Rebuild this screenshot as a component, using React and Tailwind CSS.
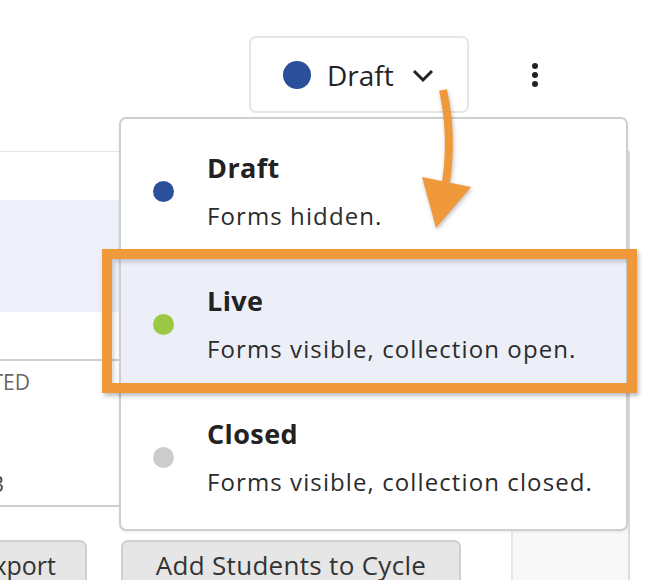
import React from 'react';

const font = { fontFamily: '"Open Sans", "Liberation Sans", sans-serif' };

// Status options shown in the open menu.
const statuses = [
    { name: 'Draft', desc: 'Forms hidden.', dot: 'bg-[#2c4f9c]', active: false },
    { name: 'Live', desc: 'Forms visible, collection open.', dot: 'bg-[#9bc944]', active: true },
    { name: 'Closed', desc: 'Forms visible, collection closed.', dot: 'bg-[#cccccc]', active: false },
];

function StatusButton() {
    return (
        <button className="flex items-center h-[77px] w-[220px] pl-[32px] border-2 border-[#e6e6e6] rounded-[7px] bg-white">
            <span className="w-[28px] h-[28px] rounded-full bg-[#2c4f9c] shrink-0" />
            <span className="ml-[16px] text-[28px] leading-none text-[#222]">Draft</span>
            <svg className="ml-[18px] mt-[2px]" width="22" height="14" viewBox="0 0 22 14">
                <path d="M2 2 L11 11 L20 2" fill="none" stroke="#222" strokeWidth="3" />
            </svg>
        </button>
    );
}

function Kebab() {
    return (
        <svg width="12" height="26" viewBox="0 0 12 26">
            <circle cx="6" cy="4" r="3" fill="#222" />
            <circle cx="6" cy="13" r="3" fill="#222" />
            <circle cx="6" cy="22" r="3" fill="#222" />
        </svg>
    );
}

function StatusMenu() {
    return (
        <div className="absolute left-[119px] top-[117px] w-[509px] h-[414px] py-[6px] bg-white border-2 border-[#cfcfcf] rounded-[7px] shadow-[0_1px_3px_rgba(0,0,0,0.08)]">
            {statuses.map((s) => (
                <div
                    key={s.name}
                    className={`flex items-center h-[133px] pl-[32px] ${s.active ? 'bg-[#eceff8]' : 'bg-white'}`}
                >
                    <span className={`w-[21px] h-[21px] rounded-full shrink-0 ${s.dot}`} />
                    <div className="ml-[33px] mt-[-2px]">
                        <div className="text-[27px] leading-[34px] font-bold tracking-[0.4px] text-[#222]">{s.name}</div>
                        <div className="mt-[16px] text-[24px] leading-[30px] tracking-[1.1px] text-[#2b2b2b]">{s.desc}</div>
                    </div>
                </div>
            ))}
        </div>
    );
}

function Annotation() {
    return (
        <>
            <div className="absolute left-[102px] top-[249px] w-[535px] h-[144px] border-[10px] border-[#f0993a] shadow-[2px_3px_4px_rgba(0,0,0,0.25),inset_2px_3px_4px_rgba(0,0,0,0.18)]" />
            <svg
                className="absolute left-[400px] top-[80px] drop-shadow-[1px_2px_2px_rgba(0,0,0,0.25)]"
                width="100"
                height="160"
                viewBox="400 80 100 160"
            >
                <path d="M443 90 Q453 135 446 182" fill="none" stroke="#f0993a" strokeWidth="8" />
                <polygon points="422,177 471,187 436,228" fill="#f0993a" />
            </svg>
        </>
    );
}

export default function App() {
    return (
        <div className="relative w-[654px] h-[580px] overflow-hidden bg-white" style={font}>
            <div className="flex items-center pt-[36px] pl-[249px]">
                <StatusButton />
                <div className="ml-[60px] mt-[1px]">
                    <Kebab />
                </div>
            </div>

            {/* card behind the menu */}
            <div className="mt-[38px] w-[630px] h-[500px] flex border-t border-r-2 border-t-[#e6e6e6] border-r-[#dcdcdc]">
                <div className="w-[511px] shrink-0">
                    <div className="h-[48px]" />
                    <div className="h-[112px] bg-[#edf0f8]" />
                    <div className="h-[49px] border-b-2 border-[#d0d0d0]" />
                    <div className="h-[146px] border-b-2 border-[#d0d0d0] flex flex-col">
                        <div className="w-[30px] flex justify-end pt-[9px]">
                            <span className="whitespace-nowrap text-[21px] leading-[24px] text-[#666]">SUBMITTED</span>
                        </div>
                        <div className="w-[4px] flex justify-end mt-[78px]">
                            <span className="whitespace-nowrap text-[21px] leading-[24px] text-[#444]">3</span>
                        </div>
                    </div>
                    <div className="flex mt-[33px]">
                        <div className="w-[87px] flex justify-end shrink-0">
                            <button className="shrink-0 whitespace-nowrap h-[60px] pl-[33px] pr-[29px] pt-[8px] bg-[#e6e6e6] border-2 border-[#cfcfcf] rounded-[7px] text-[25px] leading-[30px] text-[#333] flex">
                                Export
                            </button>
                        </div>
                        <button className="ml-[34px] w-[340px] h-[60px] pt-[8px] bg-[#e6e6e6] border-2 border-[#cfcfcf] rounded-[7px] text-[26px] leading-[30px] tracking-[0.3px] text-[#333] flex justify-center whitespace-nowrap">
                            Add Students to Cycle
                        </button>
                    </div>
                </div>
                <div className="flex-1 bg-[#f8f8f8] border-l-2 border-[#e6e6e6]" />
            </div>

            <StatusMenu />
            <Annotation />
        </div>
    );
}
